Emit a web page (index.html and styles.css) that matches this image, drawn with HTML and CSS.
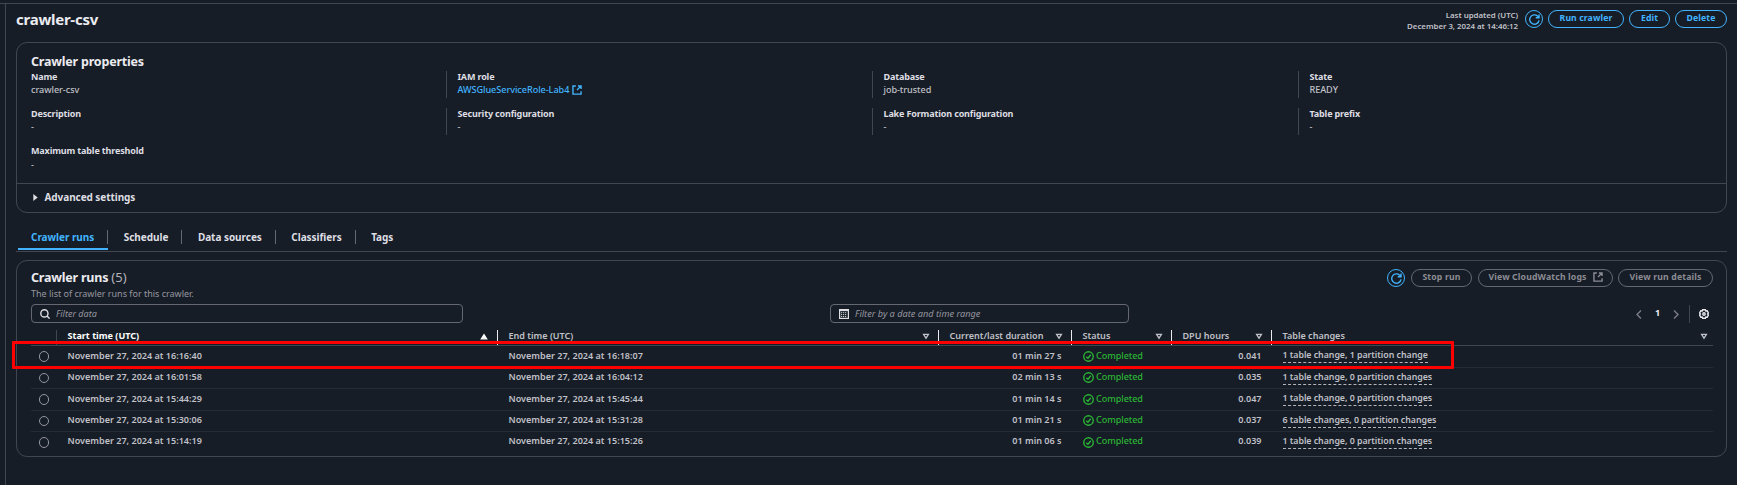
FILE: index.html
```html
<!DOCTYPE html>
<html lang="en">
<head>
<meta charset="utf-8">
<title>crawler-csv</title>
<link rel="stylesheet" href="styles.css">
</head>
<body>
<svg class="defs" width="0" height="0">
  <symbol id="refresh" viewBox="0 0 16 16"><path d="M14.6 9.2A6.8 6.8 0 1 1 12.6 3.1L14.2 4.9M14.6 .8V5.4H9.8"/></symbol>
  <symbol id="external" viewBox="0 0 16 16"><path d="M6.2 1.5H1.5V14.5H14.5V10M9.5 1.5H14.5V6.5M14.2 1.8L8 8"/></symbol>
  <symbol id="ok" viewBox="0 0 16 16"><circle cx="8" cy="8" r="6.9"/><path d="M4.7 8.2L7.2 10.6L11.3 5.4"/></symbol>
  <symbol id="sort" viewBox="0 0 8 7"><path d="M1.6 1.4H6.4L4 5.2Z"/></symbol>
</svg>
<div class="frame">
  <header class="top">
    <h1>crawler-csv</h1>
    <div class="actions">
      <div class="updated">Last updated (UTC)<br>December 3, 2024 at 14:46:12</div>
      <button class="round"><svg class="ic"><use href="#refresh"/></svg></button>
      <button class="btn run">Run crawler</button>
      <button class="btn edit">Edit</button>
      <button class="btn delete">Delete</button>
    </div>
  </header>

  <section class="panel props">
    <h2>Crawler properties</h2>
    <div class="grid">
      <div class="item first"><b>Name</b><span>crawler-csv</span></div>
      <div class="item"><b>IAM role</b><a>AWSGlueServiceRole-Lab4<svg class="ext"><use href="#external"/></svg></a></div>
      <div class="item"><b>Database</b><span>job-trusted</span></div>
      <div class="item"><b>State</b><span>READY</span></div>
      <div class="item first"><b>Description</b><span>-</span></div>
      <div class="item"><b>Security configuration</b><span>-</span></div>
      <div class="item"><b>Lake Formation configuration</b><span>-</span></div>
      <div class="item"><b>Table prefix</b><span>-</span></div>
      <div class="item first"><b>Maximum table threshold</b><span>-</span></div>
    </div>
    <div class="advanced"><svg class="caret" viewBox="0 0 5 8"><path d="M0 0L5 4L0 8Z"/></svg>Advanced settings</div>
  </section>

  <nav class="tabs">
    <a class="tab active">Crawler runs</a>
    <a class="tab">Schedule</a>
    <a class="tab">Data sources</a>
    <a class="tab">Classifiers</a>
    <a class="tab">Tags</a>
  </nav>

  <section class="panel runs">
    <div class="runs-head">
      <div>
        <h2>Crawler runs <span>(5)</span></h2>
        <p>The list of crawler runs for this crawler.</p>
      </div>
      <div class="run-actions">
        <button class="round"><svg class="ic"><use href="#refresh"/></svg></button>
        <button class="btn off stop">Stop run</button>
        <button class="btn off logs">View CloudWatch logs<svg class="ext"><use href="#external"/></svg></button>
        <button class="btn off details">View run details</button>
      </div>
    </div>
    <div class="filters">
      <div class="input data"><svg viewBox="0 0 10 10"><circle cx="4.4" cy="4.4" r="3.6"/><path d="M7 7L9.6 9.6"/></svg>Filter data</div>
      <div class="input date"><svg viewBox="0 0 10 10"><rect x=".6" y=".6" width="8.8" height="8.8"/><path d="M1 1.5H9"/><path class="dots" d="M2.1 3.7H8M2.1 5.6H8M2.1 7.5H8"/></svg>Filter by a date and time range</div>
      <div class="pager">
        <svg viewBox="0 0 6 9"><path d="M5 .5L1 4.5L5 8.5"/></svg>
        <b>1</b>
        <svg viewBox="0 0 6 9"><path d="M1 .5L5 4.5L1 8.5"/></svg>
        <i></i>
        <svg class="gear" viewBox="0 0 10 10"><path d="M3.7 .8H6.3L6.8 2L8.2 1.8L9.4 3.8L8.6 5L9.4 6.2L8.2 8.2L6.8 8L6.3 9.2H3.7L3.2 8L1.8 8.2L.6 6.2L1.4 5L.6 3.8L1.8 1.8L3.2 2Z"/><circle cx="5" cy="5" r="1.2"/></svg>
      </div>
    </div>
    <div class="table">
      <div class="row head">
        <div></div>
        <div class="sorted">Start time (UTC)<svg viewBox="0 0 8 7"><path d="M1.4 5.8H6.6L4 1.8Z"/></svg></div>
        <div>End time (UTC)<svg><use href="#sort"/></svg></div>
        <div>Current/last duration<svg><use href="#sort"/></svg></div>
        <div>Status<svg><use href="#sort"/></svg></div>
        <div>DPU hours<svg><use href="#sort"/></svg></div>
        <div>Table changes<svg><use href="#sort"/></svg></div>
      </div>
      <div class="row">
        <i class="radio"></i><div>November 27, 2024 at 16:16:40</div><div>November 27, 2024 at 16:18:07</div><div class="num">01 min 27 s</div><div class="ok"><svg><use href="#ok"/></svg>Completed</div><div class="num">0.041</div><div class="changes"><u>1 table change, 1 partition change</u></div>
        <div class="highlight"></div>
      </div>
      <div class="row">
        <i class="radio"></i><div>November 27, 2024 at 16:01:58</div><div>November 27, 2024 at 16:04:12</div><div class="num">02 min 13 s</div><div class="ok"><svg><use href="#ok"/></svg>Completed</div><div class="num">0.035</div><div class="changes"><u>1 table change, 0 partition changes</u></div>
      </div>
      <div class="row">
        <i class="radio"></i><div>November 27, 2024 at 15:44:29</div><div>November 27, 2024 at 15:45:44</div><div class="num">01 min 14 s</div><div class="ok"><svg><use href="#ok"/></svg>Completed</div><div class="num">0.047</div><div class="changes"><u>1 table change, 0 partition changes</u></div>
      </div>
      <div class="row">
        <i class="radio"></i><div>November 27, 2024 at 15:30:06</div><div>November 27, 2024 at 15:31:28</div><div class="num">01 min 21 s</div><div class="ok"><svg><use href="#ok"/></svg>Completed</div><div class="num">0.037</div><div class="changes"><u>6 table changes, 0 partition changes</u></div>
      </div>
      <div class="row">
        <i class="radio"></i><div>November 27, 2024 at 15:14:19</div><div>November 27, 2024 at 15:15:26</div><div class="num">01 min 06 s</div><div class="ok"><svg><use href="#ok"/></svg>Completed</div><div class="num">0.039</div><div class="changes"><u>1 table change, 0 partition changes</u></div>
      </div>
    </div>
  </section>
</div>
</body>
</html>
```
FILE: styles.css
```css
* { box-sizing: border-box; }
html { background: #161d26; }
body {
  margin: 0;
  height: 485px;
  padding-top: 3px;
  overflow: hidden;
  background: #161d26;
  color: #c0c0c8;
  font: 9.1px "Noto Sans", sans-serif;
}
.defs { display: block; height: 0; }
svg { fill: none; stroke: currentColor; flex: none; }
h1, h2, p { margin: 0; }
.frame {
  height: 482px;
  border-top: 1px solid #424650;
  padding: 0 10px 0 16px;
  background: linear-gradient(#424650, #424650) 5px 0 / 1px 100% no-repeat;
}

/* page header */
.top { display: flex; justify-content: space-between; height: 38px; }
h1 { padding-top: 5px; font-size: 15px; line-height: 20px; letter-spacing: -.25px; color: #ebebf0; }
.actions { display: flex; padding-top: 6px; }
.updated {
  margin-right: 7px;
  text-align: right;
  font-size: 7.9px;
  font-weight: 600;
  line-height: 11px;
  letter-spacing: -.03px;
}
.btn, .round {
  display: flex;
  justify-content: center;
  height: 18px;
  padding: 0;
  border: 1px solid #42b4ff;
  border-radius: 9px;
  background: none;
  color: #42b4ff;
  font: 700 8.7px/15px "Noto Sans", sans-serif;
  letter-spacing: .1px;
}
.round { width: 18px; align-items: center; }
.ic { width: 11px; height: 11px; stroke-width: 2; }
.run { width: 76px; margin-left: 5px; }
.edit { width: 41px; margin-left: 5px; }
.delete { width: 52px; margin-left: 5px; }
.off { border-color: #656871; color: #8c8c94; }
.ext { width: 10px; height: 10px; stroke-width: 2.2; }

/* panels */
.panel { border: 1px solid #424650; border-radius: 11px; }
h2 { font-size: 12.5px; line-height: 18px; letter-spacing: -.2px; color: #ebebf0; }
h2 span { font-size: 13px; font-weight: 400; letter-spacing: 0; color: #b4b4bb; }
.props { height: 171px; padding-top: 10px; }
.props h2 { margin-left: 14px; }
.grid {
  display: grid;
  grid-template: 27px 27px 27px / 415px 426px 426px 1fr;
  row-gap: 10px;
  height: 112px;
  padding-left: 14px;
}
.item { display: flex; flex-direction: column; padding-left: 10.5px; border-left: 1px solid #424650; }
.item.first { padding-left: 0; border-left: 0; }
.item b { font-size: 9px; line-height: 12px; letter-spacing: -.15px; color: #dedee3; }
.item span, .item a { font-weight: 500; line-height: 13px; letter-spacing: -.05px; }
.item a { display: flex; gap: 3px; align-items: center; color: #42b4ff; }
.item:last-child span { line-height: 15px; }
.advanced {
  display: flex;
  align-items: center;
  gap: 6.5px;
  border-top: 1px solid #424650;
  padding-left: 16px;
  font-size: 10px;
  font-weight: 700;
  line-height: 27px;
  letter-spacing: -.07px;
  color: #dedee3;
}
.caret { width: 5px; height: 7px; fill: currentColor; stroke: none; }

/* tabs */
.tabs { display: flex; height: 39px; padding: 15px 0 0 2px; border-bottom: 1px solid #424650; }
.tab {
  display: flex;
  height: 22px;
  padding-left: 15.5px;
  font-size: 10px;
  font-weight: 700;
  line-height: 18px;
  letter-spacing: -.04px;
  color: #dedee3;
}
.tab:not(:last-child)::after { content: ""; width: 1px; height: 14px; margin: 2px 0 0 13px; background: #656871; }
.tab.active { padding-left: 13px; border-bottom: 2px solid #42b4ff; color: #42b4ff; }

/* runs */
.runs { height: 197px; margin-top: 8px; padding: 7px 13px 0 14px; }
.runs-head { display: flex; justify-content: space-between; height: 36px; }
.runs-head h2 { height: 18px; }
.runs-head p { padding-top: 2px; font-size: 9px; line-height: 12px; color: #9696a0; }
.run-actions { display: flex; padding-top: 1px; }
.run-actions .round { margin-right: 6px; }
.run-actions .btn { letter-spacing: .15px; }
.stop { width: 61px; margin-right: 6px; }
.logs { width: 135px; margin-right: 5px; gap: 6px; }
.logs .ext { margin-top: 2px; }
.details { width: 95px; }
.filters { display: flex; height: 19px; }
.input {
  display: flex;
  align-items: center;
  height: 19px;
  border: 1px solid #656871;
  border-radius: 4px;
  color: #9696a0;
  font-size: 9px;
  font-style: italic;
}
.input svg { color: #dedee3; }
.data { width: 432px; padding-left: 7.5px; gap: 6.5px; }
.data svg { width: 10px; height: 10px; stroke-width: 1.4; }
.date { width: 299px; margin-left: 367px; padding: 0 0 1px 8px; gap: 6px; font-size: 9.2px; }
.date svg { width: 10px; height: 10px; margin-top: 1px; stroke-width: 1.2; }
.date .dots { stroke-dasharray: 1.1 .9; stroke-width: 1; }
.pager { display: flex; align-items: center; margin-left: auto; padding-right: 4px; color: #7d7d87; }
.pager svg { width: 6px; height: 9px; margin-top: 1px; stroke-width: 1.4; }
.pager b { width: 31px; padding-bottom: 3px; text-align: center; color: #ebebf0; }
.pager i { width: 1px; height: 18px; margin: 0 9px 0 10px; background: #424650; }
.pager .gear { width: 10px; height: 10px; color: #ebebf0; }

.row {
  position: relative;
  display: grid;
  grid-template-columns: 26px 441px 441px 133px 100px 100px 1fr;
  height: 21.5px;
  border-bottom: 1px solid #232b37;
  font-size: 9.05px;
  font-weight: 600;
  line-height: 18px;
}
.row:nth-child(2), .row:nth-child(4) { line-height: 19px; }
.row > div { padding-left: 10.5px; }
.row:last-child { border-bottom: 0; }
.row.head { height: 23px; padding-top: 7px; border-bottom-color: #424650; line-height: 12px; }
.head > div { display: flex; justify-content: space-between; align-items: flex-start; height: 15px; padding: 0 8px 0 10.5px; border-right: 1px solid #ebebf0; }
.head > div:first-child { border-right-color: #424650; }
.head > div:last-child { padding-right: 5px; border-right: 0; }
.head .sorted { padding-right: 9px; font-weight: 700; color: #fff; }
.head svg { width: 8px; height: 7px; margin-top: 2.5px; stroke-width: 1.3; }
.sorted svg { fill: currentColor; }
.radio { width: 10.5px; height: 10.5px; margin: 5px 0 0 7.5px; border: 1px solid #9696a0; border-radius: 50%; }
.row > .num { padding-right: 10.5px; text-align: right; }
.row > .ok { display: flex; gap: 2.5px; font-weight: 500; letter-spacing: -.05px; color: #2bb534; }
.ok svg { width: 11px; height: 11px; margin-top: 4.5px; stroke-width: 2; }
.changes { font-size: 8.8px; letter-spacing: -.03px; }
.changes u { display: inline-block; height: 17px; border-bottom: 1px dashed #b4b4bb; text-decoration: none; }
.row > .highlight { position: absolute; left: -19px; top: -5px; width: 1442px; height: 28px; padding: 0; border: 3px solid #f00; border-radius: 1px; }
```
